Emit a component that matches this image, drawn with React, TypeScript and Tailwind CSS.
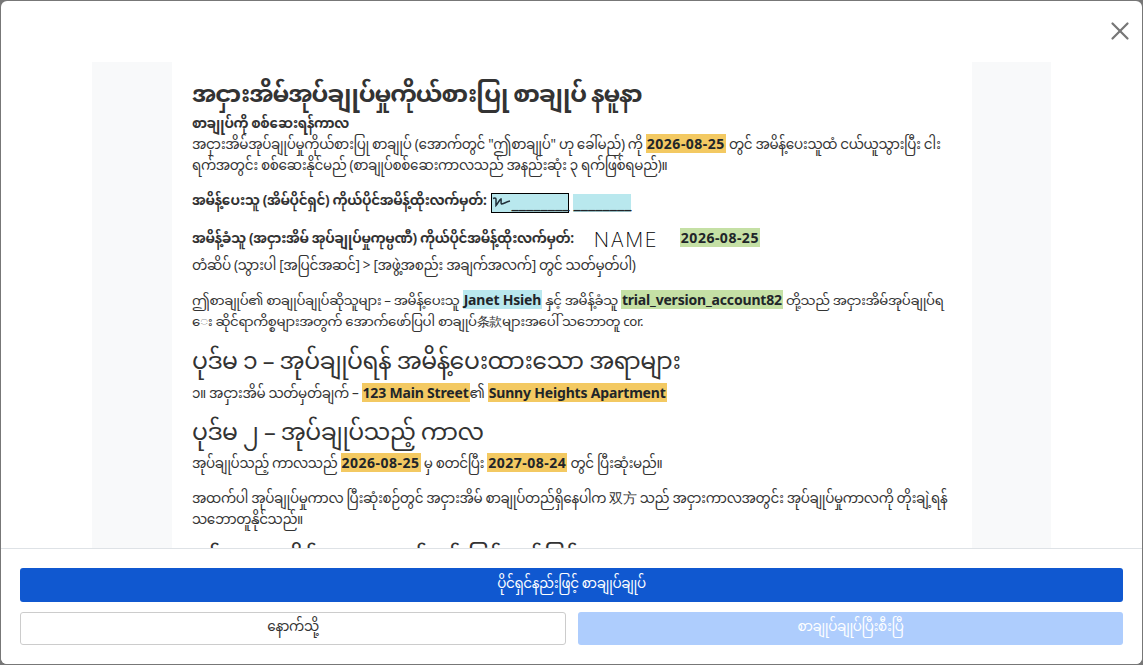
import { X } from "lucide-react";

const MM = "font-['Noto_Sans_Myanmar','Noto_Sans','Liberation_Sans',sans-serif]";

function Mark({ color, date, children }: { color: string; date?: boolean; children: React.ReactNode }) {
  return (
    <span
      className={`${color} ${date ? "tracking-[0.5px]" : "tracking-[-0.18px]"} leading-[14px] px-px font-['Noto_Sans',sans-serif] font-bold text-[14px] text-[#212529]`}
    >
      {children}
    </span>
  );
}

const orange = "bg-[#f3c962]";
const blue = "bg-[#b9e8ee]";
const green = "bg-[#c5e0a5]";

export default function App() {
  return (
    <div className={`w-[1143px] h-[665px] bg-[#777777] p-px overflow-hidden ${MM}`}>
      <div className="relative w-full h-full bg-white rounded-md overflow-hidden flex flex-col">
        <button className="absolute right-[7px] top-[15px] text-[#777777]">
          <X size={30} strokeWidth={1.8} />
        </button>
        <div className="flex-1 min-h-0 overflow-hidden pt-[61px] px-[91px]">
          <div className="bg-[#f8f9fa] pl-[80px] pr-[79px]">
            <div className="bg-white px-[20px] pt-[17px] text-[13.5px] tracking-[-0.35px] leading-[21px] text-[#333333]">
              <h1 className="text-[24px] tracking-[-1px] leading-[36px] font-bold">
                အငှားအိမ်အုပ်ချုပ်မှုကိုယ်စားပြု စာချုပ် နမူနာ
              </h1>
              <p className="font-bold">စာချုပ်ကို စစ်ဆေးရန်ကာလ</p>
              <p className="whitespace-nowrap">
                အငှားအိမ်အုပ်ချုပ်မှုကိုယ်စားပြု စာချုပ် (အောက်တွင် "ဤစာချုပ်" ဟု ခေါ်မည်) ကို <Mark color={orange} date>2026-08-25</Mark>{"  "}တွင် အမိန့်ပေးသူထံ ငယ်ယူသွားပြီး ငါး
                <br />
                ရက်အတွင်း စစ်ဆေးနိုင်မည် (စာချုပ်စစ်ဆေးကာလသည် အနည်းဆုံး ၃ ရက်ဖြစ်ရမည်)။
              </p>
              <div className="mt-[14px] flex items-center font-bold text-[13.6px]">
                <span>အမိန့်ပေးသူ (အိမ်ပိုင်ရှင်) ကိုယ်ပိုင်အမိန့်ထိုးလက်မှတ်:</span>
                <span className="ml-[5px] w-[78px] h-[20px] border border-black bg-[#b9e8ee] flex items-end">
                  <svg width="19" height="12" viewBox="0 0 19 12" className="self-start mt-[2px] shrink-0">
                    <path d="M1 2.500c1-.6 3-1 3 .5l0 6.500c2-2 3-5.500 5-6.500 .5 2-.5 4 .5 5 2 0 4-2 8.500-3" fill="none" stroke="#22303a" strokeWidth="1.5" />
                  </svg>
                  <span className="font-['DejaVu_Sans',sans-serif] font-bold text-[14.5px] leading-[17px] tracking-normal text-[#212529]">________</span>
                </span>
                <span className="ml-[4px] w-[58px] h-[18px] bg-[#b9e8ee] flex items-end font-['DejaVu_Sans',sans-serif] text-[14.5px] leading-[17px] tracking-normal text-[#212529]">________</span>
              </div>
              <div className="mt-[17px] flex items-center font-bold text-[13.6px]">
                <span>အမိန့်ခံသူ (အငှားအိမ် အုပ်ချုပ်မှုကုမ္ပဏီ) ကိုယ်ပိုင်အမိန့်ထိုးလက်မှတ်:</span>
                <span className="ml-[20px] w-[86px] font-['Inter',sans-serif] font-extralight text-[20px] tracking-[1.5px] text-black">NAME</span>
                <span><Mark color={green} date>2026-08-25</Mark></span>
              </div>
              <p className="mt-[6px] text-[13.6px]">တံဆိပ် (သွားပါ [အပြင်အဆင်] &gt; [အဖွဲ့အစည်း အချက်အလက်] တွင် သတ်မှတ်ပါ)</p>
              <p className="mt-[13px] whitespace-nowrap text-[13.3px]">
                ဤစာချုပ်၏ စာချုပ်ချုပ်ဆိုသူများ – အမိန့်ပေးသူ <Mark color={blue}>Janet Hsieh</Mark> နှင့် အမိန့်ခံသူ <Mark color={green}>trial_version_account82</Mark> တို့သည် အငှားအိမ်အုပ်ချုပ်ရ
                <br />
                ေး ဆိုင်ရာကိစ္စများအတွက် အောက်ဖော်ပြပါ စာချုပ်条款များအပေါ် သဘောတူ cor.
              </p>
              <h2 className="mt-[13px] text-[23.5px] tracking-[-0.5px] leading-[36px]">ပုဒ်မ ၁ – အုပ်ချုပ်ရန် အမိန့်ပေးထားသော အရာများ</h2>
              <p className="mt-[3px]">၁။ အငှားအိမ် သတ်မှတ်ချက် – <Mark color={orange}>123 Main Street</Mark>၏ <Mark color={orange}>Sunny Heights Apartment</Mark></p>
              <h2 className="mt-[11px] text-[23.5px] tracking-[-0.5px] leading-[36px]">ပုဒ်မ ၂ – အုပ်ချုပ်သည့် ကာလ</h2>
              <p className="mt-[2px]">အုပ်ချုပ်သည့် ကာလသည် <Mark color={orange} date>2026-08-25</Mark> မှ စတင်ပြီး <Mark color={orange} date>2027-08-24</Mark> တွင် ပြီးဆုံးမည်။</p>
              <p className="mt-[14px]">အထက်ပါ အုပ်ချုပ်မှုကာလ ပြီးဆုံးစဉ်တွင် အငှားအိမ် စာချုပ်တည်ရှိနေပါက 双方 သည် အငှားကာလအတွင်း အုပ်ချုပ်မှုကာလကို တိုးချဲ့ရန် သဘောတူနိုင်သည်။</p>
              <h2 className="mt-[11px] text-[23.5px] tracking-[-0.5px] leading-[36px]">ပုဒ်မ ၃ – အိမ်လခပေးရန် နှင့် ပြင်ဆင်ခြင်း</h2>
            </div>
          </div>
        </div>
        <div className="shrink-0 h-[116px] border-t border-[#dee2e6] bg-white px-[19px] pt-[19px] flex flex-col gap-[10px] text-[13.5px] tracking-[-0.35px]">
          <button className="h-[34px] w-full rounded-[3px] bg-[#1058d0] text-white">ပိုင်ရှင်နည်းဖြင့် စာချုပ်ချုပ်</button>
          <div className="flex gap-[12px]">
            <button className="flex-1 h-[33px] rounded-[3px] border border-[#cccccc] text-[#333333]">နောက်သို့</button>
            <button className="w-[545px] h-[33px] rounded-[3px] bg-[#aecdfd] text-white">စာချုပ်ချုပ်ပြီးစီးပြီ</button>
          </div>
        </div>
      </div>
    </div>
  );
}
